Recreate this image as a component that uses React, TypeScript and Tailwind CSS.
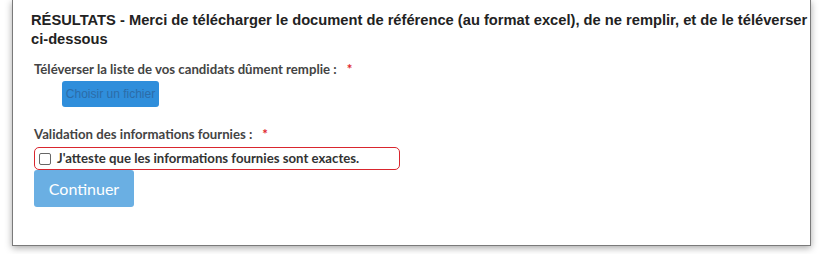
import React from 'react';

export default function App() {
  return (
    <div className="bg-white w-[822px] h-[254px] overflow-hidden">
      <div className="ml-[12px] mr-[11px] h-[246px] bg-white border-x border-b border-[#7a7a7a] shadow-[0_2px_7px_rgba(0,0,0,0.35)] pl-[18px] pr-0 pt-[11px]">
        {/* Title */}
        <h2 className="text-[14.7px] leading-[19px] font-bold text-[#222] font-['Liberation_Sans',Arial,sans-serif]">
          RÉSULTATS - Merci de télécharger le document de référence (au format excel), de ne remplir, et de le téléverser ci-dessous
        </h2>

        <div className="pl-[3px] font-['Lato','Open_Sans',sans-serif]">
          {/* Upload */}
          <div className="mt-[11px] flex items-center text-[13.2px] leading-[18px] font-bold text-[#444]">
            <span>Téléverser la liste de vos candidats dûment remplie :</span>
            <span className="ml-[10px] text-[#e0242b]">*</span>
          </div>
          <div className="mt-[2px] pl-[28px]">
            <button
              type="button"
              className="w-[97px] h-[26px] rounded-[3px] bg-[#2f8edb] text-[12px] text-[#2c6ca8] font-['Liberation_Sans',Arial,sans-serif]"
            >
              Choisir un fichier
            </button>
          </div>

          {/* Validation */}
          <div className="mt-[18px] flex items-center text-[13.2px] leading-[18px] font-bold text-[#444]">
            <span>Validation des informations fournies :</span>
            <span className="ml-[10px] text-[#e0242b]">*</span>
          </div>
          <label className="mt-[4px] flex items-center w-[366px] h-[23px] border border-[#d9262e] rounded-[5px] pl-[4px]">
            <span className="w-[12px] h-[12px] border border-[#666] rounded-[2px] bg-white" />
            <span className="ml-[6px] text-[13.2px] font-bold text-[#333]">
              J'atteste que les informations fournies sont exactes.
            </span>
          </label>
          <button
            type="button"
            className="w-[100px] h-[37px] rounded-[3px] bg-[#6aafe3] text-white text-[16px]"
          >
            Continuer
          </button>
        </div>
      </div>
    </div>
  );
}
